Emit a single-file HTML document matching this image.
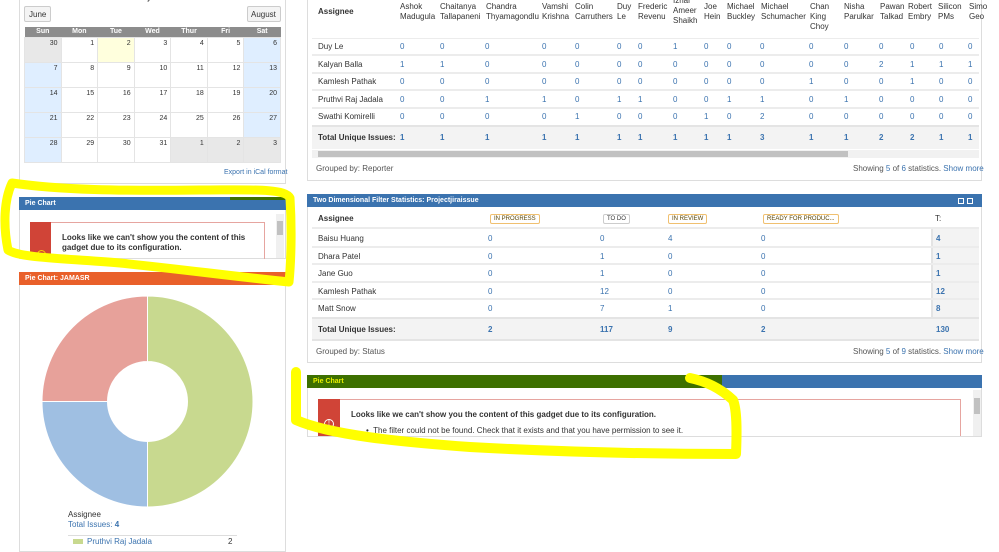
<!DOCTYPE html>
<html><head><meta charset="utf-8"><style>
*{margin:0;padding:0;box-sizing:border-box}
body{width:999px;height:542px;overflow:hidden;background:#fff;font-family:"Liberation Sans",sans-serif;font-size:8px;color:#333;position:relative}
.a{position:absolute;white-space:nowrap}
.l{color:#3b73af}
.b{font-weight:bold}
.panel{position:absolute;border:1px solid #ddd;background:#fff}
.hdr{position:absolute;height:13px;color:#fff;font-weight:bold;font-size:7px;padding:3px 0 0 6px}
.cal td{border:1px solid #e4e4e4;text-align:right;vertical-align:top;padding:2px 3px;width:37px;height:25px;font-size:7px}
.cal th{background:#8c8c8c;color:#fff;font-size:7px;height:10px;font-weight:bold}
.cal{border-collapse:collapse;position:absolute;left:24px;top:27px;width:257px}
.g{background:#e8e8e8}.w{background:#dfeeff}.y{background:#ffffdd}
.hd{position:absolute;top:2px;line-height:10px;font-size:8px;color:#333}
.row{position:absolute;left:312px;width:667px;height:2px;background:#ececec}
.lz{position:absolute;top:214px;font-size:6px;border:1px solid #f0c070;border-radius:2px;padding:1px 3px;color:#594300}
</style></head><body>

<!-- calendar panel -->
<div class="panel" style="left:19px;top:-2px;width:267px;height:186px"></div>
<div class="a b" style="left:137px;top:-5px;font-size:7px">July 2019</div>
<div class="a" style="left:24px;top:6px;width:27px;height:16px;border:1px solid #ccc;border-radius:2px;background:#f4f4f4;font-size:8px;padding:3px 4px">June</div>
<div class="a" style="left:247px;top:6px;width:34px;height:16px;border:1px solid #ccc;border-radius:2px;background:#f4f4f4;font-size:8px;padding:3px 3px">August</div>
<table class="cal">
<tr><th>Sun</th><th>Mon</th><th>Tue</th><th>Wed</th><th>Thur</th><th>Fri</th><th>Sat</th></tr>
<tr><td class="g">30</td><td>1</td><td class="y">2</td><td>3</td><td>4</td><td>5</td><td class="w">6</td></tr>
<tr><td class="w">7</td><td>8</td><td>9</td><td>10</td><td>11</td><td>12</td><td class="w">13</td></tr>
<tr><td class="w">14</td><td>15</td><td>16</td><td>17</td><td>18</td><td>19</td><td class="w">20</td></tr>
<tr><td class="w">21</td><td>22</td><td>23</td><td>24</td><td>25</td><td>26</td><td class="w">27</td></tr>
<tr><td class="w">28</td><td>29</td><td>30</td><td>31</td><td class="g">1</td><td class="g">2</td><td class="g">3</td></tr>
</table>
<div class="a l" style="left:224px;top:169px;font-size:7px">Export in iCal format</div>

<!-- left pie chart error -->
<div class="panel" style="left:19px;top:197px;width:267px;height:62px"></div>
<div class="hdr" style="left:19px;top:197px;width:267px;background:#3b73af">Pie Chart</div>
<div class="a" style="left:230px;top:197px;width:55px;height:3px;background:#3d7000"></div>
<div class="a" style="left:30px;top:222px;width:235px;height:37px;border:1px solid #e6a5a0;border-bottom:none"></div>
<div class="a" style="left:30px;top:222px;width:21px;height:37px;background:#d04437"></div>
<div class="a" style="left:37px;top:250px;width:9px;height:9px;border-radius:50%;border:1px solid #fc0;background:#d04437"></div>
<div class="a b" style="left:62px;top:233px;font-size:8px;line-height:10px;color:#333">Looks like we can't show you the content of this<br>gadget due to its configuration.</div>
<div class="a" style="left:276px;top:214px;width:8px;height:44px;background:#f0f0f0"></div>
<div class="a" style="left:277px;top:221px;width:6px;height:14px;background:#c1c1c1"></div>

<!-- JAMASR panel -->
<div class="panel" style="left:19px;top:272px;width:267px;height:280px"></div>
<div class="hdr" style="left:19px;top:272px;width:267px;background:#e9602a">Pie Chart: JAMASR</div>
<svg class="a" style="left:40px;top:294px" width="215" height="215" viewBox="0 0 215 215">
<path d="M107.5 2 A105.5 105.5 0 0 1 107.5 213 L107.5 147.5 A40 40 0 0 0 107.5 67.5 Z" fill="#c8d98f" stroke="#fff" stroke-width="1"/>
<path d="M107.5 213 A105.5 105.5 0 0 1 2 107.5 L67.5 107.5 A40 40 0 0 0 107.5 147.5 Z" fill="#9fbfe2" stroke="#fff" stroke-width="1"/>
<path d="M2 107.5 A105.5 105.5 0 0 1 107.5 2 L107.5 67.5 A40 40 0 0 0 67.5 107.5 Z" fill="#e7a19a" stroke="#fff" stroke-width="1"/>
</svg>
<div class="a" style="left:68px;top:510px;font-size:8px">Assignee</div>
<div class="a l" style="left:68px;top:520px;font-size:8px">Total Issues: <b>4</b></div>
<div class="a" style="left:68px;top:535px;width:169px;height:1px;background:#ddd"></div>
<div class="a" style="left:73px;top:539px;width:10px;height:5px;background:#c8d98f"></div>
<div class="a l" style="left:87px;top:537px;font-size:8px">Pruthvi Raj Jadala</div>
<div class="a" style="left:228px;top:537px;font-size:8px">2</div>

<!-- right panel 1 -->
<div class="panel" style="left:307px;top:-2px;width:675px;height:183px"></div>
<div class="a b" style="left:318px;top:7px;font-size:8px">Assignee</div>
<div class="hd" style="left:400px">Ashok<br>Madugula</div>
<div class="hd" style="left:440px">Chaitanya<br>Tallapaneni</div>
<div class="hd" style="left:486px">Chandra<br>Thyamagondlu</div>
<div class="hd" style="left:542px;top:-8px">Ch<br>Vamshi<br>Krishna</div>
<div class="hd" style="left:575px">Colin<br>Carruthers</div>
<div class="hd" style="left:617px">Duy<br>Le</div>
<div class="hd" style="left:638px">Frederic<br>Revenu</div>
<div class="hd" style="left:673px;top:-4px">Izhar<br>Ameer<br>Shaikh</div>
<div class="hd" style="left:704px">Joe<br>Hein</div>
<div class="hd" style="left:727px">Michael<br>Buckley</div>
<div class="hd" style="left:761px">Michael<br>Schumacher</div>
<div class="hd" style="left:810px">Chan<br>King<br>Choy</div>
<div class="hd" style="left:844px">Nisha<br>Parulkar</div>
<div class="hd" style="left:880px">Pawan<br>Talkad</div>
<div class="hd" style="left:908px">Robert<br>Embry</div>
<div class="hd" style="left:938px">Silicon<br>PMs</div>
<div class="hd" style="left:969px">Simo<br>Geo</div>
<div class="row" style="top:38px;height:1px"></div>
<div class="row" style="top:54px"></div>
<div class="row" style="top:72px"></div>
<div class="row" style="top:89px"></div>
<div class="row" style="top:107px"></div>
<div class="a" style="left:312px;top:125px;width:667px;height:24px;background:#f3f3f3;border-top:2px solid #e4e4e4"></div>
<div class="a" style="left:318px;top:38px;line-height:17.5px;font-size:8px">Duy Le<br>Kalyan Balla<br>Kamlesh Pathak<br>Pruthvi Raj Jadala<br>Swathi Komirelli</div>
<div class="a b" style="left:318px;top:133px;font-size:8px">Total Unique Issues:</div>
<div class="a l" style="left:400px;top:38px;line-height:17.5px;font-size:8px">
<span class="a" style="left:0">0<br>1<br>0<br>0<br>0</span><span class="a" style="left:40px">0<br>1<br>0<br>0<br>0</span><span class="a" style="left:85px">0<br>0<br>0<br>1<br>0</span><span class="a" style="left:142px">0<br>0<br>0<br>1<br>0</span><span class="a" style="left:175px">0<br>0<br>0<br>0<br>1</span><span class="a" style="left:217px">0<br>0<br>0<br>1<br>0</span><span class="a" style="left:238px">0<br>0<br>0<br>1<br>0</span><span class="a" style="left:273px">1<br>0<br>0<br>0<br>0</span><span class="a" style="left:304px">0<br>0<br>0<br>0<br>1</span><span class="a" style="left:327px">0<br>0<br>0<br>1<br>0</span><span class="a" style="left:360px">0<br>0<br>0<br>1<br>2</span><span class="a" style="left:409px">0<br>0<br>1<br>0<br>0</span><span class="a" style="left:444px">0<br>0<br>0<br>1<br>0</span><span class="a" style="left:479px">0<br>2<br>0<br>0<br>0</span><span class="a" style="left:510px">0<br>1<br>1<br>0<br>0</span><span class="a" style="left:539px">0<br>1<br>0<br>0<br>0</span><span class="a" style="left:568px">0<br>1<br>0<br>0<br>0</span>
</div>
<div class="a l b" style="left:400px;top:133px;font-size:8px">
<span class="a" style="left:0">1</span><span class="a" style="left:40px">1</span><span class="a" style="left:85px">1</span><span class="a" style="left:142px">1</span><span class="a" style="left:175px">1</span><span class="a" style="left:217px">1</span><span class="a" style="left:238px">1</span><span class="a" style="left:273px">1</span><span class="a" style="left:304px">1</span><span class="a" style="left:327px">1</span><span class="a" style="left:360px">3</span><span class="a" style="left:409px">1</span><span class="a" style="left:444px">1</span><span class="a" style="left:479px">2</span><span class="a" style="left:510px">2</span><span class="a" style="left:539px">1</span><span class="a" style="left:568px">1</span>
</div>
<div class="a" style="left:312px;top:150px;width:667px;height:8px;background:#f1f1f1"></div>
<div class="a" style="left:318px;top:151px;width:530px;height:6px;background:#c1c1c1"></div>
<div class="a" style="left:316px;top:164px;font-size:8px;color:#555">Grouped by: Reporter</div>
<div class="a" style="left:853px;top:164px;font-size:8px;color:#555">Showing <span class="l">5</span> of <span class="l">6</span> statistics. <span class="l">Show more</span></div>

<!-- right panel 2 -->
<div class="panel" style="left:307px;top:194px;width:675px;height:169px"></div>
<div class="hdr" style="left:307px;top:194px;width:675px;background:#3b73af">Two Dimensional Filter Statistics: Projectjiraissue</div>
<div class="a" style="left:958px;top:198px;width:6px;height:6px;border:1px solid #fff"></div>
<div class="a" style="left:967px;top:198px;width:6px;height:6px;border:1px solid #fff"></div>
<div class="a b" style="left:318px;top:214px;font-size:8px">Assignee</div>
<div class="lz" style="left:490px">IN PROGRESS</div>
<div class="lz" style="left:603px;border-color:#ccc;color:#333">TO DO</div>
<div class="lz" style="left:668px">IN REVIEW</div>
<div class="lz" style="left:763px">READY FOR PRODUC...</div>
<div class="a" style="left:935px;top:214px;font-size:8px">T:</div>
<div class="a" style="left:931px;top:228px;width:48px;height:92px;background:#f3f3f3;border-left:2px solid #e4e4e4"></div>
<div class="row" style="top:227px"></div>
<div class="row" style="top:246px"></div>
<div class="row" style="top:263px"></div>
<div class="row" style="top:281px"></div>
<div class="row" style="top:298px"></div>
<div class="a" style="left:312px;top:317px;width:667px;height:24px;background:#f3f3f3;border-top:2px solid #e4e4e4;border-bottom:2px solid #e4e4e4"></div>
<div class="a" style="left:318px;top:230px;line-height:17.6px;font-size:8px">Baisu Huang<br>Dhara Patel<br>Jane Guo<br>Kamlesh Pathak<br>Matt Snow</div>
<div class="a l" style="left:488px;top:230px;line-height:17.6px;font-size:8px">0<br>0<br>0<br>0<br>0</div>
<div class="a l" style="left:600px;top:230px;line-height:17.6px;font-size:8px">0<br>1<br>1<br>12<br>7</div>
<div class="a l" style="left:668px;top:230px;line-height:17.6px;font-size:8px">4<br>0<br>0<br>0<br>1</div>
<div class="a l" style="left:761px;top:230px;line-height:17.6px;font-size:8px">0<br>0<br>0<br>0<br>0</div>
<div class="a l b" style="left:936px;top:230px;line-height:17.6px;font-size:8px">4<br>1<br>1<br>12<br>8</div>
<div class="a b" style="left:318px;top:325px;font-size:8px">Total Unique Issues:</div>
<div class="a l b" style="left:488px;top:325px;font-size:8px">2</div>
<div class="a l b" style="left:600px;top:325px;font-size:8px">117</div>
<div class="a l b" style="left:668px;top:325px;font-size:8px">9</div>
<div class="a l b" style="left:761px;top:325px;font-size:8px">2</div>
<div class="a l b" style="left:936px;top:325px;font-size:8px">130</div>
<div class="a" style="left:316px;top:347px;font-size:8px;color:#555">Grouped by: Status</div>
<div class="a" style="left:853px;top:347px;font-size:8px;color:#555">Showing <span class="l">5</span> of <span class="l">9</span> statistics. <span class="l">Show more</span></div>

<!-- right panel 3 -->
<div class="panel" style="left:307px;top:375px;width:675px;height:62px"></div>
<div class="a" style="left:307px;top:375px;width:675px;height:13px;background:#3b73af"></div>
<div class="a" style="left:307px;top:375px;width:415px;height:13px;background:#3d7000"></div>
<div class="a b" style="left:313px;top:378px;font-size:7px;color:#e8f000">Pie Chart</div>
<div class="a" style="left:318px;top:399px;width:643px;height:37px;border:1px solid #e6a5a0;border-bottom:none"></div>
<div class="a" style="left:318px;top:399px;width:22px;height:37px;background:#d04437"></div>
<div class="a" style="left:324px;top:419px;width:10px;height:10px;border-radius:50%;border:1px solid #fff;color:#fff;font-size:7px;text-align:center;line-height:8px">!</div>
<div class="a b" style="left:351px;top:410px;font-size:8px">Looks like we can't show you the content of this gadget due to its configuration.</div>
<div class="a" style="left:366px;top:426px;font-size:8px">•&nbsp; The filter could not be found. Check that it exists and that you have permission to see it.</div>
<div class="a" style="left:973px;top:390px;width:8px;height:46px;background:#f0f0f0"></div>
<div class="a" style="left:974px;top:398px;width:6px;height:16px;background:#c1c1c1"></div>

<!-- yellow highlights -->
<svg class="a" style="left:0;top:0" width="999" height="542">
<g fill="none" stroke="#ffff00" stroke-linecap="round" stroke-linejoin="round">
<path d="M12 183 C60 190 120 191 200 190 C250 190 285 188 290 198 C292 230 291 262 289 282 C230 276 180 269 120 263 C60 258 20 258 8 250 C3 225 4 200 12 183" stroke-width="9"/>
<path d="M296 372 L296 420 C330 435 400 442 470 447 C560 452 650 454 736 454 C737 430 737 410 733 400 C720 388 705 381 690 378" stroke-width="10"/>
</g>
</svg>
</body></html>
